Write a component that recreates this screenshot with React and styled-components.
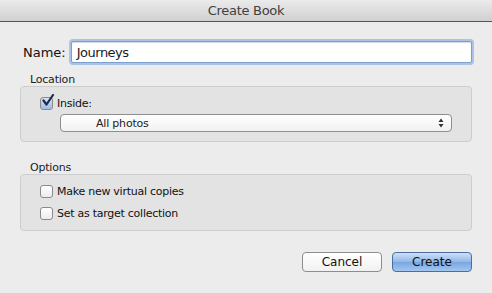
import styled, { createGlobalStyle } from "styled-components";

const GlobalStyle = createGlobalStyle`
  html, body {
    margin: 0;
    padding: 0;
    background: #ececec;
  }
  body {
    font-family: "DejaVu Sans", "Liberation Sans", sans-serif;
    color: #1a1a1a;
  }
`;

function CheckBox({ checked }) {
  return (
    <StCheck checked={checked}>
      {checked && (
        <svg width="14" height="14" viewBox="0 0 14 14">
          <path
            d="M2.5 6.5 L5.5 10.5 L12 1"
            fill="none"
            stroke="#1f2a44"
            strokeWidth="2.2"
            strokeLinecap="round"
            strokeLinejoin="round"
          />
        </svg>
      )}
    </StCheck>
  );
}

function App() {
  return (
    <StWindow>
      <GlobalStyle />
      <StTitleBar>Create Book</StTitleBar>
      <StBody>
        <StNameRow>
          <StNameLabel>Name:</StNameLabel>
          <StInput>Journeys</StInput>
        </StNameRow>

        <StSectionLabel>Location</StSectionLabel>
        <StGroup gap="3px">
          <StCheckRow>
            <CheckBox checked />
            <span>Inside:</span>
          </StCheckRow>
          <StPopup>
            <span>All photos</span>
            <svg width="6" height="10" viewBox="0 0 6 10">
              <path d="M3 0.5 L5.5 4 L0.5 4 Z" fill="#333" />
              <path d="M3 9.5 L5.5 6 L0.5 6 Z" fill="#333" />
            </svg>
          </StPopup>
        </StGroup>

        <StSectionLabel gap="19px">Options</StSectionLabel>
        <StGroup gap="6px">
          <StCheckRow>
            <CheckBox />
            <span>Make new virtual copies</span>
          </StCheckRow>
          <StCheckRow>
            <CheckBox />
            <span>Set as target collection</span>
          </StCheckRow>
        </StGroup>

        <StButtons>
          <StButton>Cancel</StButton>
          <StButton primary>Create</StButton>
        </StButtons>
      </StBody>
    </StWindow>
  );
}

export default App;

const StWindow = styled.div`
  width: 492px;
  height: 293px;
  display: flex;
  flex-direction: column;
  background: #ececec;
  overflow: hidden;
`;

const StTitleBar = styled.div`
  height: 21px;
  flex-shrink: 0;
  display: flex;
  align-items: center;
  justify-content: center;
  font-size: 13px;
  letter-spacing: -0.3px;
  color: #404040;
  background: linear-gradient(#ebebeb, #d0d0d0);
  border-bottom: 1px solid #555;
`;

const StBody = styled.div`
  padding: 19px 20px 0 20px;
  display: flex;
  flex-direction: column;
`;

const StNameRow = styled.div`
  display: flex;
  align-items: center;
  gap: 5px;
  padding-left: 3px;
`;

const StNameLabel = styled.label`
  font-size: 13px;
  color: #111;
`;

const StInput = styled.div`
  flex: 1;
  box-sizing: border-box;
  height: 22px;
  padding: 0 5px;
  display: flex;
  align-items: center;
  font-size: 13px;
  letter-spacing: -0.5px;
  background: #fff;
  border: 1px solid #7d9fc9;
  border-radius: 2px;
  box-shadow: 0 0 0 2px #a9c4e6, inset 0 1px 1px rgba(0, 0, 0, 0.15);
`;

const StSectionLabel = styled.div`
  margin-top: ${(p) => p.gap || "10px"};
  padding-left: 10px;
  font-size: 11px;
  line-height: 13px;
  letter-spacing: -0.2px;
  color: #222;
`;

const StGroup = styled.div`
  padding: 8px 19px 9px 19px;
  display: flex;
  flex-direction: column;
  gap: ${(p) => p.gap};
  background: #e3e3e3;
  border: 1px solid #cdcdcd;
  border-radius: 4px;
`;

const StCheckRow = styled.div`
  display: flex;
  align-items: center;
  gap: 4px;
  height: 16px;
  font-size: 11px;
  letter-spacing: -0.26px;
  color: #111;
`;

const StCheck = styled.div`
  width: 13px;
  height: 13px;
  box-sizing: border-box;
  position: relative;
  flex-shrink: 0;
  border: 1px solid #8a8a8a;
  border-radius: 3px;
  background: ${(p) =>
    p.checked
      ? "linear-gradient(#d3e3f6, #9ebde6)"
      : "linear-gradient(#ffffff, #ececec)"};

  svg {
    position: absolute;
    left: 0;
    top: -4px;
  }
`;

const StPopup = styled.div`
  height: 18px;
  margin-left: 20px;
  box-sizing: border-box;
  display: flex;
  align-items: center;
  justify-content: space-between;
  padding: 0 7px 0 35px;
  font-size: 11px;
  letter-spacing: -0.2px;
  background: linear-gradient(#ffffff, #f1f1f1);
  border: 1px solid #8e8e8e;
  border-radius: 4px;
`;

const StButtons = styled.div`
  margin-top: 21px;
  display: flex;
  justify-content: flex-end;
  gap: 10px;
`;

const StButton = styled.button`
  width: 80px;
  height: 20px;
  font-family: inherit;
  font-size: 12px;
  color: #111;
  padding: 0;
  border-radius: 4px;
  border: 1px solid ${(p) => (p.primary ? "#4b6d9f" : "#8e8e8e")};
  background: ${(p) =>
    p.primary
      ? "linear-gradient(#cfe0f6, #8fb6e8 50%, #78a6e2 51%, #a4c6f0)"
      : "linear-gradient(#ffffff, #f1f1f1)"};
`;
